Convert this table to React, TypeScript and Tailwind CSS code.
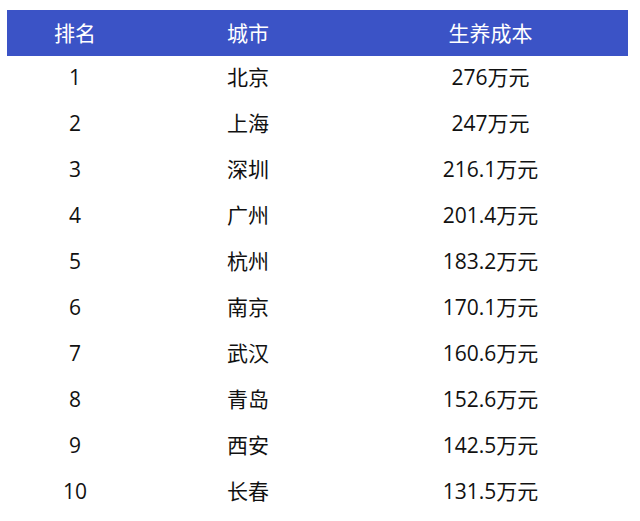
import React from "react";

const rows: [string, string, string][] = [
  ["1", "北京", "276万元"],
  ["2", "上海", "247万元"],
  ["3", "深圳", "216.1万元"],
  ["4", "广州", "201.4万元"],
  ["5", "杭州", "183.2万元"],
  ["6", "南京", "170.1万元"],
  ["7", "武汉", "160.6万元"],
  ["8", "青岛", "152.6万元"],
  ["9", "西安", "142.5万元"],
  ["10", "长春", "131.5万元"],
];

export default function App() {
  return (
    <div
      className="w-[640px] h-[521px] bg-white pt-[10px] pl-[7px]"
      style={{ fontFamily: '"Open Sans", "Noto Sans CJK SC", sans-serif' }}
    >
      <div className="w-[621px]">
        <div className="flex h-[46px] items-center bg-[#3b53c6] text-[21px] leading-none text-white">
          <div className="w-[136px] text-center">排名</div>
          <div className="w-[210px] text-center">城市</div>
          <div className="flex-1 text-center">生养成本</div>
        </div>
        {rows.map(([r, c, v]) => (
          <div key={r} className="flex h-[46px] items-center pb-[4px] text-[21px] leading-none text-[#111]">
            <div className="w-[136px] text-center">{r}</div>
            <div className="w-[210px] text-center">{c}</div>
            <div className="flex-1 text-center">{v}</div>
          </div>
        ))}
      </div>
    </div>
  );
}
